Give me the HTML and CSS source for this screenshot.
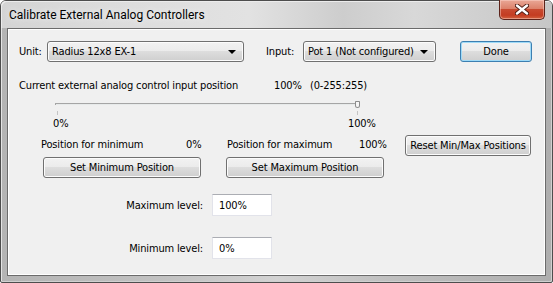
FILE: index.html
```html
<!DOCTYPE html>
<html lang="en">
<head>
    <meta charset="UTF-8">
    <title>Calibrate External Analog Controllers</title>
    <link rel="stylesheet" href="styles.css">
</head>
<body>
    <div class="window">
        <div class="titlebar">
            <span class="title">Calibrate External Analog Controllers</span>
            <div class="close-btn">
                <svg width="14" height="11" viewBox="0 0 14 11">
                    <path d="M2 1.5 L12 9.5 M12 1.5 L2 9.5" stroke="#4a1a12" stroke-width="4.2" stroke-linecap="round"/>
                    <path d="M2 1.5 L12 9.5 M12 1.5 L2 9.5" stroke="#fff" stroke-width="2.4" stroke-linecap="round"/>
                </svg>
            </div>
        </div>

        <div class="client">
            <div class="row-top">
                <span class="lbl lbl-unit">Unit:</span>
                <div class="combo combo-unit">
                    <span>Radius 12x8 EX-1</span>
                    <span class="arrow"></span>
                </div>
                <span class="lbl lbl-input">Input:</span>
                <div class="combo combo-input">
                    <span>Pot 1 (Not configured)</span>
                    <span class="arrow"></span>
                </div>
                <div class="btn btn-done">Done</div>
            </div>

            <div class="row-current">
                <span class="cur-label">Current external analog control input position</span>
                <span class="cur-pct">100%</span>
                <span>(0-255:255)</span>
            </div>

            <div class="slider">
                <div class="track"></div>
                <div class="tick tick-min"></div>
                <div class="tick tick-max"></div>
                <div class="thumb"></div>
            </div>

            <div class="row-scale">
                <span class="scale-min">0%</span>
                <span>100%</span>
            </div>

            <div class="row-pos">
                <span class="pos-min-label">Position for minimum</span>
                <span class="pos-min-val">0%</span>
                <span class="pos-max-label">Position for maximum</span>
                <span class="pos-max-val">100%</span>
                <div class="btn btn-reset">Reset Min/Max Positions</div>
            </div>

            <div class="row-set">
                <div class="btn btn-set">Set Minimum Position</div>
                <div class="btn btn-set btn-set-max">Set Maximum Position</div>
            </div>

            <div class="row-level row-level-max">
                <span class="level-label">Maximum level:</span>
                <div class="textbox">100%</div>
            </div>

            <div class="row-level row-level-min">
                <span class="level-label">Minimum level:</span>
                <div class="textbox">0%</div>
            </div>
        </div>
    </div>
</body>
</html>
```
FILE: styles.css
```css
* {
    margin: 0;
    padding: 0;
    box-sizing: border-box;
}

body {
    width: 553px;
    height: 283px;
    overflow: hidden;
    background: #fff;
    font-family: "DejaVu Sans Condensed", "Liberation Sans", sans-serif;
    font-size: 11px;
    letter-spacing: -0.15px;
    line-height: 13px;
    color: #000;
}

.window {
    width: 553px;
    height: 283px;
    border: 1px solid #4d4d4d;
    border-radius: 6px 6px 2px 2px;
    background: linear-gradient(to right, #b4b4b4 0%, #c2c2c2 30%, #d3d3d3 50%, #c0c0c0 70%, #aeaeae 100%);
    box-shadow: inset 1px 1px 0 #e4e4e4, inset -1px -1px 0 #d0d0d0;
    display: flex;
    flex-direction: column;
}

.titlebar {
    height: 27px;
    position: relative;
    background: linear-gradient(to right, #d4d4d4 0%, #dcdcdc 20%, #e2e2e2 45%, #cdcdcd 62%, #d8d8d8 75%, #c6c6c6 100%);
    border-radius: 5px 5px 0 0;
    box-shadow: inset 1px 1px 0 #ececec;
}

.title {
    position: absolute;
    left: 8px;
    top: 6px;
    font-family: Roboto, "Liberation Sans", sans-serif;
    font-size: 12px;
    letter-spacing: 0;
    line-height: 16px;
    color: #000;
    text-shadow: 0 0 6px rgba(255, 255, 255, 0.9);
}

.close-btn {
    position: absolute;
    left: 498px;
    top: -1px;
    width: 46px;
    height: 20px;
    border: 1px solid #5c231a;
    border-top: none;
    border-radius: 0 0 5px 5px;
    background: linear-gradient(#e9a796 0%, #dc826b 45%, #c84a30 50%, #c43c22 80%, #d2623f 100%);
    box-shadow: inset 0 0 0 1px rgba(255, 220, 210, 0.45);
    display: flex;
    align-items: center;
    justify-content: center;
}

.client {
    flex: 1;
    margin: 0 6px 6px 6px;
    background: #f0f0f0;
    border: 1px solid #6b6b6b;
    box-shadow: inset 1px 1px 0 #fff, inset -1px -1px 0 #fff;
}

/* top row: unit, input, done */
.row-top {
    display: flex;
    align-items: center;
    height: 21px;
    margin-top: 12px;
    padding-left: 11px;
}

.lbl-unit {
    width: 28px;
}

.lbl-input {
    width: 37px;
    margin-left: 22px;
}

.combo,
.btn {
    height: 21px;
    border: 1px solid #707070;
    border-radius: 3px;
    background: linear-gradient(#f2f2f2 0%, #ebebeb 50%, #dddddd 50%, #cfcfcf 100%);
    box-shadow: inset 0 0 0 1px #fcfcfc;
}

.combo {
    display: flex;
    align-items: center;
    justify-content: space-between;
    padding: 0 4px 0 4px;
}

.combo-unit {
    width: 197px;
}

.combo-input {
    width: 133px;
}

.arrow {
    width: 0;
    height: 0;
    margin-right: 3px;
    border-left: 4px solid transparent;
    border-right: 4px solid transparent;
    border-top: 4px solid #000;
}

.btn {
    display: flex;
    align-items: center;
    justify-content: center;
}

.btn-done {
    width: 72px;
    margin-left: 24px;
    border-color: #3c7fb1;
    box-shadow: inset 0 0 0 1px #9fdaf7;
}

/* current position */
.row-current {
    display: flex;
    margin-top: 17px;
    padding-left: 11px;
    height: 13px;
}

.cur-label {
    width: 255px;
}

.cur-pct {
    width: 36px;
}

/* slider */
.slider {
    position: relative;
    width: 304px;
    height: 18px;
    margin: 6px 0 0 47px;
}

.track {
    position: absolute;
    left: 0;
    top: 5px;
    width: 302px;
    height: 2px;
    border-top: 1px solid #a5a5a5;
    border-left: 1px solid #a5a5a5;
    background: #e7eaea;
}

.tick {
    position: absolute;
    top: 13px;
    width: 1px;
    height: 4px;
    background: #c4c4c4;
}

.tick-min {
    left: 2px;
}

.tick-max {
    left: 302px;
}

.thumb {
    position: absolute;
    left: 300px;
    top: 3px;
    width: 5px;
    height: 7px;
    border: 1px solid #8c8c8c;
    border-radius: 1px 1px 3px 3px;
    background: #f6f6f6;
}

/* 0% / 100% */
.row-scale {
    display: flex;
    height: 13px;
    margin-top: 1px;
    padding-left: 45px;
}

.scale-min {
    width: 295px;
}

/* positions row */
.row-pos {
    display: flex;
    align-items: flex-start;
    height: 21px;
    margin-top: 5px;
    padding-left: 33px;
}

.row-pos span {
    padding-top: 3px;
}

.pos-min-label {
    width: 145px;
}

.pos-min-val {
    width: 41px;
}

.pos-max-label {
    width: 132px;
}

.pos-max-val {
    width: 46px;
}

.btn-reset {
    width: 126px;
}

/* set buttons */
.row-set {
    display: flex;
    margin-top: 1px;
    padding-left: 35px;
}

.btn-set {
    width: 158px;
}

.btn-set-max {
    margin-left: 25px;
}

/* level boxes */
.row-level {
    display: flex;
    align-items: center;
    height: 22px;
}

.row-level-max {
    margin-top: 16px;
}

.row-level-min {
    margin-top: 21px;
}

.level-label {
    width: 195px;
    text-align: right;
}

.textbox {
    width: 60px;
    height: 22px;
    margin-left: 9px;
    padding: 0 0 0 6px;
    display: flex;
    align-items: center;
    background: #fff;
    border: 1px solid #e2e3ea;
    border-top-color: #abadb3;
}
```
